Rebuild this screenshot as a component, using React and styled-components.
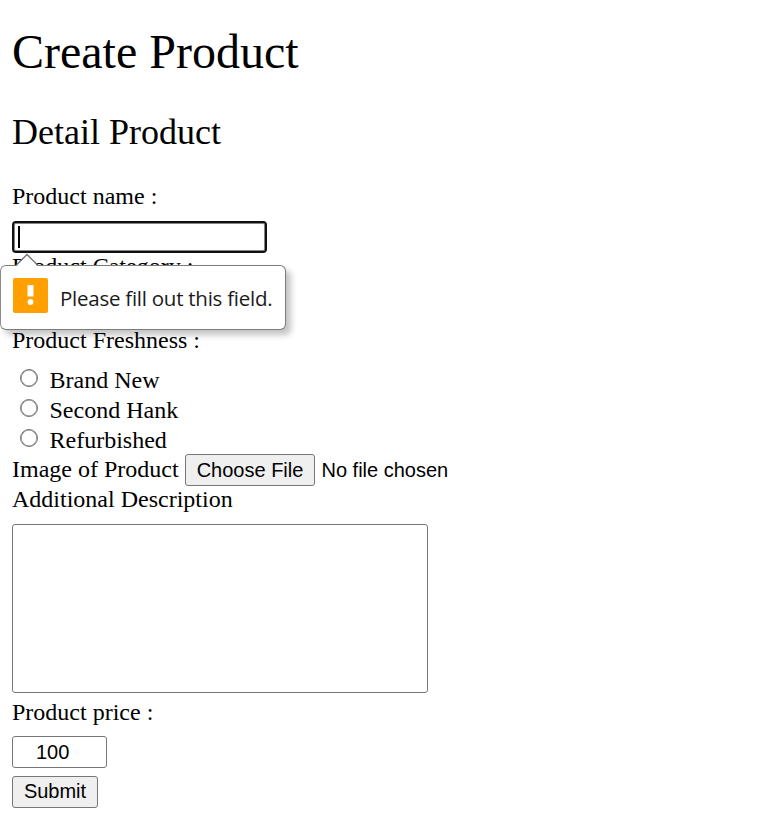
import React from "react";
import styled, { createGlobalStyle } from "styled-components";

const GlobalStyle = createGlobalStyle`
  *, *::before, *::after { box-sizing: border-box; }
  body {
    margin: 0;
    background: #fff;
    color: #000;
    font: 24px/28px "Liberation Serif", "Times New Roman", serif;
  }
`;

const Page = styled.main`
  display: flow-root;
  height: 832px;
  padding-left: 12px;
  overflow: hidden;
`;

const Title = styled.h1`
  margin: 24px 0 31px;
  font-size: 48px;
  font-weight: 400;
  line-height: 56px;
`;

const Subtitle = styled.h2`
  margin: 0 0 29px;
  font-size: 36px;
  font-weight: 400;
  line-height: 42px;
`;

const Form = styled.form`
  display: flex;
  flex-direction: column;
  align-items: flex-start;
`;

const Label = styled.label`
  display: block;
  height: 28px;
  margin-bottom: ${({ $gap = 11 }) => $gap}px;
  white-space: nowrap;
`;

const NameField = styled.div`
  position: relative;
  height: 31px;
`;

const NameInput = styled.input`
  display: block;
  width: 255px;
  height: 32px;
  padding: 0 6px;
  border: 2px solid #101010;
  border-radius: 4px;
  outline: none;
  background: #fff;
  box-shadow: inset 0 0 0 1px #858585;
  font: 20px "Liberation Sans", Arial, sans-serif;
`;

const Caret = styled.span`
  position: absolute;
  left: 6px;
  top: 5px;
  width: 2px;
  height: 22px;
  background: #000;
`;

const Bubble = styled.div`
  position: absolute;
  z-index: 2;
  left: -12px;
  top: 44px;
  display: flex;
  align-items: center;
  width: 286px;
  height: 65px;
  padding: 0 0 4px 13px;
  border: 1px solid #7b7b7b;
  border-left-color: #8d8d8d;
  border-radius: 6px;
  background: #fff;
  box-shadow: 5px 5px 6px rgba(0, 0, 0, 0.24);
`;

const Pointer = styled.svg`
  position: absolute;
  left: 14px;
  top: -13px;
`;

const WarningIcon = styled.svg`
  flex: none;
  margin-left: -1px;
`;

const Message = styled.span`
  margin: 5px 0 0 12px;
  color: #1a1a1a;
  font: 20.5px/28px "Open Sans", "Noto Sans", sans-serif;
  letter-spacing: -0.25px;
  white-space: nowrap;
`;

const CategorySelect = styled.select`
  width: 150px;
  height: 28px;
  margin: -3px 0 10px;
  border: 1px solid #767676;
  border-radius: 3px;
  background: #fff;
`;

const Options = styled.div`
  display: flex;
  flex-direction: column;
  margin-bottom: -1px;
`;

const Option = styled.label`
  display: flex;
  height: 30px;
  padding-left: 8px;
  line-height: 30px;
`;

const Radio = styled.input`
  appearance: none;
  width: 18px;
  height: 18px;
  margin: 4px 11.5px 0 0;
  border: 1px solid #767676;
  border-radius: 50%;
  background: #fff;
  box-shadow: inset 0 0 0 0.6px #767676;
`;

const FileRow = styled.div`
  display: flex;
  height: 31px;
  line-height: 30px;
`;

const Button = styled.button`
  flex: none;
  width: ${({ $width }) => $width}px;
  height: 32px;
  padding: 0 0 ${({ $lift = 0 }) => $lift}px;
  border: 1px solid #767676;
  border-radius: 3px;
  background: #efefef;
  color: #000;
  font: 20px/${({ $lift = 0 }) => 30 - $lift}px "Liberation Sans", Arial, sans-serif;
`;

const FileName = styled.span`
  margin-left: 6.5px;
  font: 20px/32px "Liberation Sans", Arial, sans-serif;
`;

const FileLabel = styled.span`
  width: 173px;
`;

const Description = styled.textarea`
  display: block;
  width: 416px;
  height: 169px;
  margin: 0 0 5px;
  border: 1px solid #767676;
  border-radius: 3px;
  outline: none;
  resize: none;
  background: #fff;
`;

const Price = styled.input`
  display: block;
  width: 95px;
  height: 32px;
  margin: 0 0 8px;
  padding: 0 0 0 23px;
  border: 1px solid #767676;
  border-radius: 3px;
  background: #fff;
  color: #000;
  font: 20px "Liberation Sans", Arial, sans-serif;
`;

const freshness = ["Brand New", "Second Hank", "Refurbished"];

export default function App() {
  return (
    <>
      <GlobalStyle />
      <Page>
        <Title>Create Product</Title>
        <Subtitle>Detail Product</Subtitle>
        <Form noValidate onSubmit={(e) => e.preventDefault()}>
          <Label htmlFor="name">Product name :</Label>
          <NameField>
            <NameInput id="name" />
            <Caret />
            <Bubble role="alert">
              <Pointer width="24" height="14" viewBox="0 0 24 14">
                <path d="M1.5 13 12 1.5 22.5 13V14H1.5Z" fill="#fff" />
                <path d="M1 12.5 12 1.5 23 12.5" fill="none" stroke="#707070" strokeWidth="1.3" />
              </Pointer>
              <WarningIcon width="35" height="35" viewBox="0 0 35 35">
                <rect width="35" height="35" rx="2" fill="#ffa000" />
                <path d="M14.5 7h6v11.5h-6z" fill="#fff" />
                <circle cx="17.5" cy="24" r="2.9" fill="#fff" />
              </WarningIcon>
              <Message>Please fill out this field.</Message>
            </Bubble>
          </NameField>
          <Label htmlFor="category">Product Category :</Label>
          <CategorySelect id="category" />
          <Label as="div">Product Freshness :</Label>
          <Options>
            {freshness.map((name) => (
              <Option key={name}>
                <Radio type="radio" name="freshness" />
                {name}
              </Option>
            ))}
          </Options>
          <FileRow>
            <FileLabel>Image of Product</FileLabel>
            <Button type="button" $width={130}>Choose File</Button>
            <FileName>No file chosen</FileName>
          </FileRow>
          <Label htmlFor="description">Additional Description</Label>
          <Description id="description" />
          <Label htmlFor="price" $gap={10}>Product price :</Label>
          <Price id="price" defaultValue="100" />
          <Button type="submit" $width={86} $lift={2}>Submit</Button>
        </Form>
      </Page>
    </>
  );
}
